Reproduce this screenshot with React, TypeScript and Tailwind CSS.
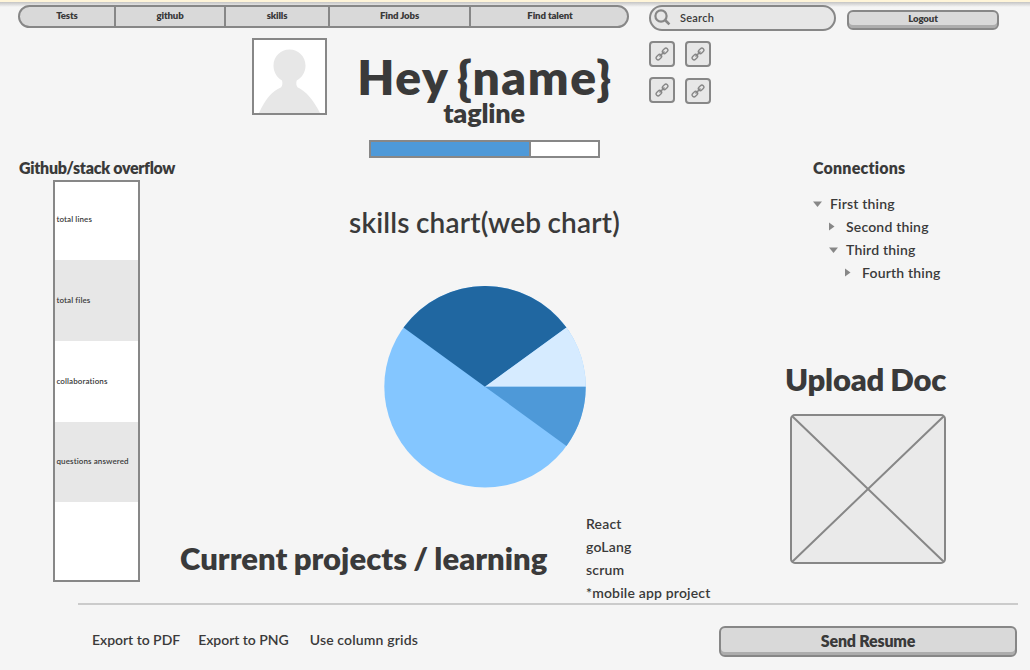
import type { ReactNode } from "react";

const tabs = [
  { label: "Tests", width: "w-[96px]" },
  { label: "github", width: "w-[110px]" },
  { label: "skills", width: "w-[104px]" },
  { label: "Find Jobs", width: "w-[141px]" },
  { label: "Find talent", width: "w-[158px]" },
];

const stats = [
  { label: "total lines", style: "h-[78px] bg-white pb-[4px]" },
  { label: "total files", style: "h-[81px] bg-[#e7e7e7] pb-[2px]" },
  { label: "collaborations", style: "h-[81px] bg-white pb-[2px]" },
  { label: "questions answered", style: "h-[80px] bg-[#e7e7e7] pb-[2px]" },
  { label: "", style: "h-[78px] bg-white" },
];

const projects = ["React", "goLang", "scrum", "*mobile app project"];

const connections = [
  { label: "First thing", open: true, indent: "pl-0" },
  { label: "Second thing", open: false, indent: "pl-4" },
  { label: "Third thing", open: true, indent: "pl-4" },
  { label: "Fourth thing", open: false, indent: "pl-8" },
];

function NavTabs() {
  return (
    <nav className="flex h-[23px] w-[611px] overflow-hidden rounded-full border-2 border-[#878787] bg-[#d9d9d9]">
      {tabs.map((tab) => (
        <a
          key={tab.label}
          className={`${tab.width} shrink-0 border-r-2 border-[#878787] text-center text-[9.6px] leading-[18px] font-extrabold tracking-[-0.12px] last:border-r-0`}
        >
          {tab.label}
        </a>
      ))}
    </nav>
  );
}

function SearchBox() {
  return (
    <div className="ml-5 flex h-[26px] w-[187px] items-center rounded-full border-2 border-[#878787] bg-[#e7e7e7] pb-px pl-[3px]">
      <svg width="17" height="17" viewBox="0 0 17 17" fill="none" stroke="#878787">
        <circle cx="7" cy="7" r="5.6" strokeWidth="2.200" />
        <path d="M11 11l4.400 4.400" strokeWidth="2.600" />
      </svg>
      <span className="ml-[9px] text-[11px] leading-none font-semibold tracking-[0.25px]">Search</span>
    </div>
  );
}

function RaisedButton({ className, children }: { className: string; children: ReactNode }) {
  return (
    <button
      className={`${className} flex justify-center rounded-md border-2 border-[#878787] bg-[#d9d9d9] font-extrabold`}
    >
      {children}
    </button>
  );
}

function Avatar() {
  return (
    <svg width="75" height="77" viewBox="0 0 75 77">
      <rect x="1" y="1" width="73" height="75" fill="#fff" stroke="#878787" strokeWidth="2" />
      <path
        d="M37.500 11.500c-9 0-16 7.200-16 16 0 6.500 3.300 12 8.500 15 .8 2.800.4 5-.8 6.800C20 53 13 62 7 75h61C62 63 54 53 45.500 49.300c-1.200-1.800-1.600-4-.8-6.800 5.500-3 8.800-8.500 8.800-15 0-8.800-7-16-16-16z"
        fill="#e7e7e7"
      />
    </svg>
  );
}

function LinkButton({ className = "" }: { className?: string }) {
  return (
    <button
      className={`${className} flex size-[26px] items-center justify-center rounded-[4px] border-2 border-[#878787] bg-[#e7e7e7]`}
    >
      <svg width="16" height="16" viewBox="0 0 16 16" fill="none" stroke="#878787" strokeWidth="1.300">
        <g transform="rotate(-45 8 8)">
          <rect x="0.500" y="6" width="6.200" height="4" rx="2" />
          <rect x="9.300" y="6" width="6.200" height="4" rx="2" />
          <path d="M4.500 8h7" strokeWidth="1.600" />
        </g>
      </svg>
    </button>
  );
}

function PieChart() {
  return (
    <svg width="202" height="202" viewBox="-101 -100.700 202 202">
      <circle r="100.700" fill="#84c6ff" />
      <path d="M0 0L-81.470 -59.190A100.700 100.700 0 0 1 81.470 -59.190Z" fill="#2067a1" />
      <path d="M0 0L81.470 -59.190A100.700 100.700 0 0 1 100.700 0Z" fill="#d6ebff" />
      <path d="M0 0H100.700A100.700 100.700 0 0 1 81.470 59.190Z" fill="#4e99d8" />
    </svg>
  );
}

function Caret({ open }: { open: boolean }) {
  return (
    <svg width="9" height="9" viewBox="0 0 9 9" fill="#878787">
      {open ? <path d="M0 2.500h9L4.500 8z" /> : <path d="M0 .5v8L5.500 4.500z" />}
    </svg>
  );
}

function ActivityPanel() {
  return (
    <section className="w-[180px] shrink-0 pt-[126px]">
      <h2 className="pl-[19px] text-base leading-[22px] font-extrabold tracking-[-0.3px] whitespace-nowrap">
        Github/stack overflow
      </h2>
      <ul className="mt-px ml-[53px] w-[87px] border-2 border-[#878787]">
        {stats.map((row) => (
          <li
            key={row.style + row.label}
            className={`${row.style} flex items-center pl-[1.5px] text-[8px] font-semibold tracking-[0.1px] whitespace-nowrap`}
          >
            {row.label}
          </li>
        ))}
      </ul>
    </section>
  );
}

function Profile() {
  return (
    <main className="flex w-[605px] shrink-0 flex-col pt-[7px]">
      <div className="flex h-[120px] pl-[72px]">
        <Avatar />
        <div className="ml-[19px] flex w-[276px] flex-col items-center">
          <h1 className="pt-[10px] pl-[2px] text-[48px] leading-[58px] font-extrabold tracking-[1.6px] [word-spacing:-4px] whitespace-nowrap">
            Hey {"{name}"}
          </h1>
          <p className="-mt-[7px] text-[27px] leading-[28px] font-extrabold tracking-[-0.2px]">tagline</p>
          <div className="mt-[13px] h-[18px] w-[231px] shrink-0 border-2 border-[#878787] bg-white">
            <div className="h-full w-[160px] border-r-2 border-[#878787] bg-[#4e99d8]" />
          </div>
        </div>
        <div className="ml-[27px] grid h-[64px] grid-cols-[26px_26px] content-start gap-[10px] pt-[3px]">
          <LinkButton />
          <LinkButton />
          <LinkButton />
          <LinkButton className="mt-px" />
        </div>
      </div>

      <section className="flex flex-col items-center pr-px pl-[5px]">
        <h2 className="mt-[47px] text-[28px] leading-[34px] font-semibold tracking-[0.2px] [word-spacing:-1px]">
          skills chart(web chart)
        </h2>
        <div className="mt-[47px]">
          <PieChart />
        </div>
      </section>

      <section className="mt-[24px] flex">
        <h2 className="w-[406px] shrink-0 pt-[26px] text-[31px] leading-[40px] font-extrabold tracking-[0.03px] [word-spacing:-1px] whitespace-nowrap">
          Current projects / learning
        </h2>
        <ul className="text-[14px] leading-[23px] font-semibold tracking-[0.18px] whitespace-nowrap">
          {projects.map((name) => (
            <li key={name}>{name}</li>
          ))}
        </ul>
      </section>
    </main>
  );
}

function Sidebar() {
  return (
    <aside className="w-[245px] pt-[126px]">
      <h2 className="pl-[28px] text-base leading-[22px] font-extrabold tracking-[0.2px]">Connections</h2>
      <ul className="mt-[13px] pl-[28px] text-[14px] leading-[23px] font-semibold tracking-[0.18px]">
        {connections.map((item) => (
          <li key={item.label} className={`${item.indent} flex items-center gap-2`}>
            <Caret open={item.open} />
            {item.label}
          </li>
        ))}
      </ul>
      <h2 className="mt-[75px] text-[31px] leading-[40px] font-extrabold tracking-[-0.2px] [word-spacing:-1px]">
        Upload Doc
      </h2>
      <svg className="mt-[15px] ml-[5px]" width="156" height="150" viewBox="0 0 156 150" stroke="#878787" strokeWidth="2">
        <rect x="1" y="1" width="154" height="148" rx="4" fill="#eaeaea" />
        <path d="M2 2l152 146M154 2L2 148" />
      </svg>
    </aside>
  );
}

function Footer() {
  return (
    <footer className="ml-[78px] flex h-[67px] w-[940px] border-t-2 border-[#cbcbcb] pt-[21px]">
      <div className="flex w-[641px] gap-[18px] pl-[14px] text-[14px] leading-[28px] font-semibold">
        <a className="tracking-[-0.03px]">Export to PDF</a>
        <a className="tracking-[-0.03px]">Export to PNG</a>
        <a className="ml-[3px] tracking-[0.15px]">Use column grids</a>
      </div>
      <RaisedButton className="h-[31px] w-[298px] text-base leading-[25px] tracking-[-0.2px] shadow-[inset_0_-3px_0_#adadad]">
        Send Resume
      </RaisedButton>
    </footer>
  );
}

export default function App() {
  return (
    <div className="flex h-[670px] w-[1030px] flex-col overflow-hidden bg-[#f5f5f5] bg-[linear-gradient(to_bottom,#fff5d9_0,#fff5d9_2px,#c4c4c4_2px,#f5f5f5_7px)] font-['Lato','Liberation_Sans',sans-serif] text-[#3a3a3a]">
      <header className="flex h-[31px] shrink-0 items-start pt-[5px] pl-[18px]">
        <NavTabs />
        <SearchBox />
        <RaisedButton className="mt-[5px] ml-[11px] h-[20px] w-[152px] text-[9.6px] leading-[14px] tracking-[-0.12px] shadow-[inset_0_-3px_0_#adadad]">
          Logout
        </RaisedButton>
      </header>
      <div className="flex h-[572px] shrink-0">
        <ActivityPanel />
        <Profile />
        <Sidebar />
      </div>
      <Footer />
    </div>
  );
}
